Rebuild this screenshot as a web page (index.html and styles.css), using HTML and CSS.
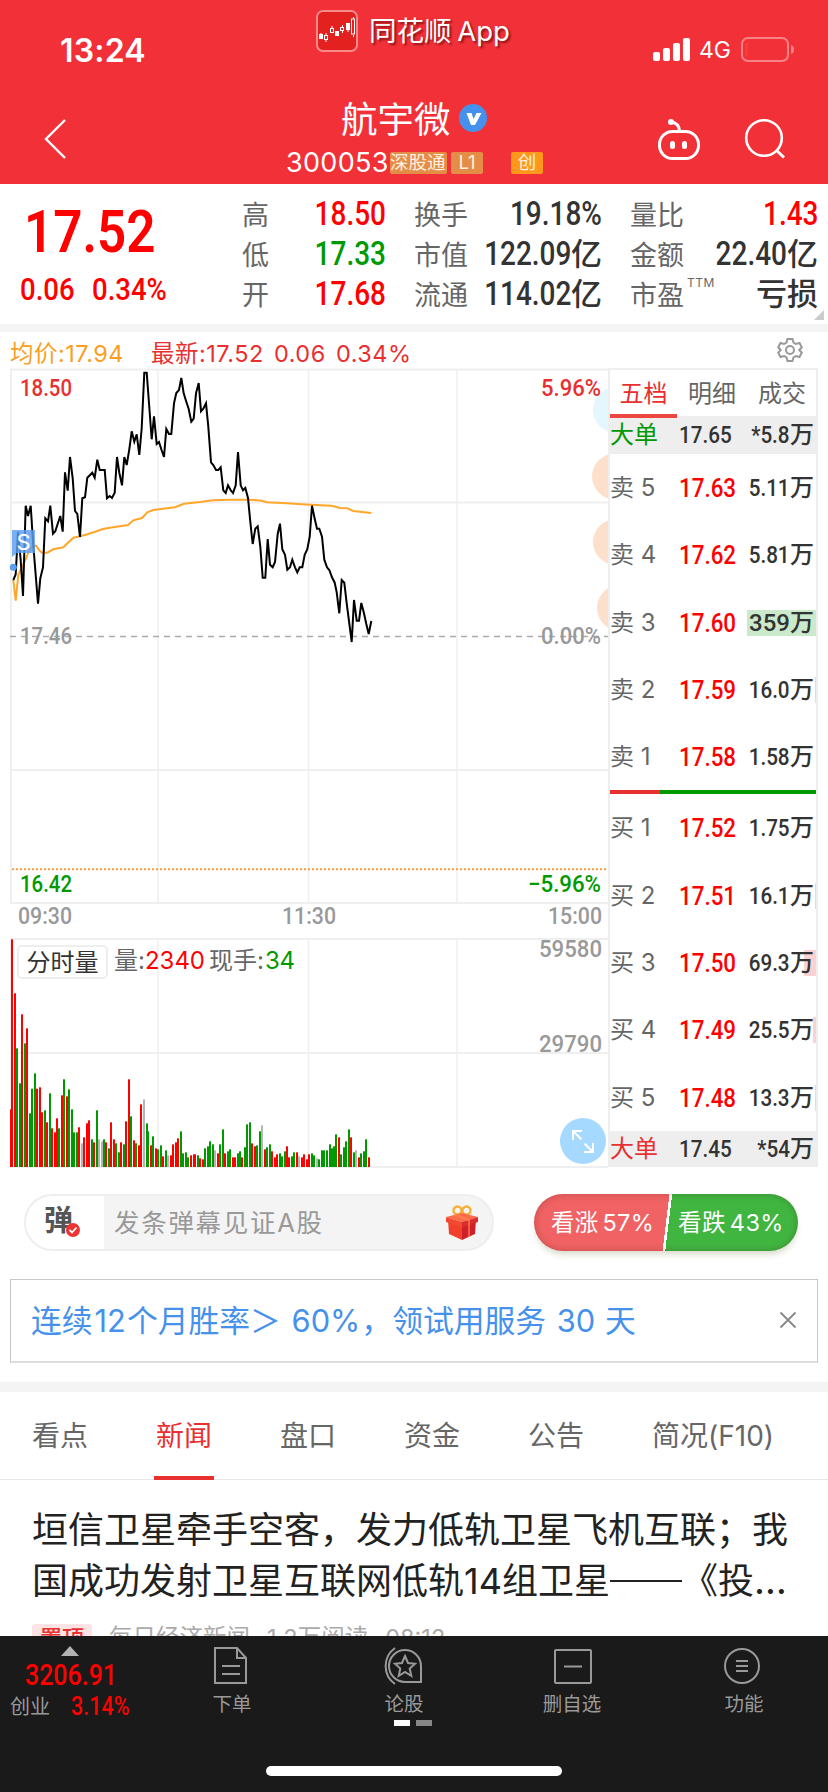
FILE: index.html
```html
<!DOCTYPE html>
<html lang="zh-CN">
<head>
    <meta charset="UTF-8">
    <meta name="viewport" content="width=device-width, initial-scale=1.0">
    <title>航宇微 300053</title>
    <link rel="stylesheet" href="styles.css">
</head>
<body>
    <header class="header">
        <div class="status">
            <div class="time">13:24</div>
            <div class="brand">
                <svg class="brand-logo" width="42" height="42" viewBox="0 0 42 42">
                    <rect x="1" y="1" width="40" height="40" rx="6" fill="#e3211f" stroke="#f98a8c" stroke-width="2"/>
                    <g fill="#fff" stroke="#fff">
                        <rect x="3.500" y="24.500" width="3" height="4"/>
                        <rect x="8.500" y="25.500" width="3" height="4" fill="none"/>
                        <path d="M5 23v2M10 23v2M10 30v2M16 16v2M26.500 15v2M26.500 20v3M32 20v2M37.500 7v2M37.500 25v2"/>
                        <rect x="14.500" y="18.500" width="3" height="4" fill="none"/>
                        <rect x="19.500" y="21.500" width="3" height="4"/>
                        <rect x="24.500" y="17.500" width="3" height="3" fill="none"/>
                        <rect x="30.500" y="13.500" width="3" height="6"/>
                        <rect x="35.500" y="9" width="3" height="15" fill="none"/>
                    </g>
                </svg>
                <span>同花顺 App</span>
            </div>
            <div class="signal">
                <svg width="38" height="24" viewBox="0 0 38 24" fill="#fff">
                    <rect x="0" y="14" width="7" height="9" rx="2"/>
                    <rect x="10" y="10" width="7" height="13" rx="2"/>
                    <rect x="20" y="5" width="7" height="18" rx="2"/>
                    <rect x="30" y="0" width="7" height="23" rx="2"/>
                </svg>
                <span>4G</span>
                <svg width="54" height="26" viewBox="0 0 54 26">
                    <rect x="1" y="1" width="46" height="23" rx="6" fill="none" stroke="#f88386" stroke-width="2"/>
                    <rect x="4" y="5" width="3" height="15" rx="1.500" fill="#ff3b30"/>
                    <path d="M50 8q3 1 3 4.500t-3 4.500z" fill="#f88386"/>
                </svg>
            </div>
        </div>
        <div class="nav">
            <svg class="back" width="24" height="42" viewBox="0 0 24 42" fill="none" stroke="#fff" stroke-width="2.400">
                <path d="M22 2L3 21l19 19"/>
            </svg>
            <div class="title">
                <div class="name">航宇微
                    <svg width="28" height="28" viewBox="0 0 28 28">
                        <circle cx="14" cy="14" r="14" fill="#4691eb"/>
                        <path d="M7.500 9h5l2 6 3-6h5l-6.500 12h-4z" fill="#fff"/>
                    </svg>
                </div>
                <div class="code">300053<i class="tag first">深股通</i><i class="tag">L1</i><i class="tag cyb">创</i></div>
            </div>
            <div class="nav-icons">
                <svg width="44" height="44" viewBox="0 0 44 44" fill="none" stroke="#fff" stroke-width="3">
                    <rect x="2.500" y="13.500" width="39" height="27" rx="13"/>
                    <path d="M14 4q8 1 8.500 9"/>
                    <circle cx="14" cy="4" r="3" fill="#fff" stroke="none"/>
                    <rect x="13" y="23" width="5" height="8" rx="2.500" fill="#fff" stroke="none"/>
                    <rect x="25" y="23" width="5" height="8" rx="2.500" fill="#fff" stroke="none"/>
                </svg>
                <svg width="42" height="42" viewBox="0 0 42 42" fill="none" stroke="#fff" stroke-width="2.600">
                    <circle cx="20" cy="20" r="17.800"/>
                    <path d="M32 32l8 7.500" stroke-width="3"/>
                </svg>
            </div>
        </div>
    </header>

    <section class="quote">
        <div class="price">
            <div class="last"><b class="num">17.52</b></div>
            <div class="change"><b class="num">0.06</b><b class="num">0.34%</b></div>
        </div>
        <dl class="stats s1">
            <dt>高</dt><dd class="up"><b class="num">18.50</b></dd>
            <dt>低</dt><dd class="down"><b class="num">17.33</b></dd>
            <dt>开</dt><dd class="up"><b class="num">17.68</b></dd>
        </dl>
        <dl class="stats s2">
            <dt>换手</dt><dd><b class="num">19.18%</b></dd>
            <dt>市值</dt><dd><b class="num">122.09</b>亿</dd>
            <dt>流通</dt><dd><b class="num">114.02</b>亿</dd>
        </dl>
        <dl class="stats s3">
            <dt>量比</dt><dd class="up"><b class="num">1.43</b></dd>
            <dt>金额</dt><dd><b class="num">22.40</b>亿</dd>
            <dt>市盈<sup>TTM</sup></dt><dd>亏损</dd>
        </dl>
        <i class="corner"></i>
    </section>

    <div class="legend">
        <span class="avg">均价:17.94</span>
        <span class="now">最新:17.52&nbsp; 0.06&nbsp; 0.34%</span>
        <svg width="26" height="26" viewBox="0 0 26 26" fill="none" stroke="#999" stroke-width="2">
            <path d="M10.500 2h5l1 3.500 2.500 1.500 3.500-1 2.300 4.300-2.500 2.700 2.500 2.700-2.300 4.300-3.500-1-2.500 1.500-1 3.500h-5l-1-3.500L7 19l-3.500 1-2.300-4.300L3.700 13l-2.500-2.700L3.500 6 7 7l2.500-1.500z"/>
            <circle cx="13" cy="13" r="4"/>
        </svg>
    </div>

    <section class="market">
        <!-- one chart unit is one page pixel, counted from the top of the page -->
        <svg class="chart" width="608" height="802" viewBox="0 368 608 802">
            <g stroke="#efefef" stroke-width="2" fill="none">
                <path d="M11 369v534M11 939v229"/>
                <path d="M158 370v533M308.500 370v533M457 370v533M158 940v227M308.500 940v227M457 940v227" stroke-width="1.500"/>
                <path d="M10 369.500h598M12 502.500h596M12 770h596M10 903h598M10 939h598M12 1053h596M10 1167h598"/>
            </g>
            <path d="M10 636.500h598" stroke="#aaa" stroke-width="1.300" stroke-dasharray="6 5"/>
            <path d="M12 869.300h595" stroke="#ff9a3c" stroke-width="2" stroke-dasharray="2 2"/>
            <g fill="#fde0cc">
                <circle cx="616" cy="410" r="23" fill="#e3f7fd"/>
                <circle cx="615" cy="476.500" r="23"/>
                <circle cx="616" cy="542" r="23"/>
                <circle cx="620" cy="608" r="23"/>
            </g>
            <g class="axis">
                <text x="20" y="396" textLength="52" lengthAdjust="spacingAndGlyphs" class="red">18.50</text>
                <text x="541" y="396" textLength="60" lengthAdjust="spacingAndGlyphs" class="red">5.96%</text>
                <text x="20" y="643.500" textLength="52" lengthAdjust="spacingAndGlyphs">17.46</text>
                <text x="541" y="643.500" textLength="60" lengthAdjust="spacingAndGlyphs">0.00%</text>
                <text x="20" y="892" textLength="52" lengthAdjust="spacingAndGlyphs" class="green">16.42</text>
                <text x="528" y="892" textLength="73" lengthAdjust="spacingAndGlyphs" class="green">−5.96%</text>
                <text x="18" y="923.500" textLength="54" lengthAdjust="spacingAndGlyphs">09:30</text>
                <text x="282" y="923.500" textLength="54" lengthAdjust="spacingAndGlyphs">11:30</text>
                <text x="548" y="923.500" textLength="54" lengthAdjust="spacingAndGlyphs">15:00</text>
                <text x="539" y="957" textLength="63" lengthAdjust="spacingAndGlyphs">59580</text>
                <text x="539" y="1052" textLength="63" lengthAdjust="spacingAndGlyphs">29790</text>
            </g>
            <polyline id="avgLine" fill="none" stroke="#ffa62b" stroke-width="2"/>
            <polyline id="priceLine" fill="none" stroke="#000" stroke-width="2"/>
            <g>
                <path d="M12 530h23v23H17l-5 4z" fill="#5c9ff0" fill-opacity=".82"/>
                <circle cx="13.300" cy="567.300" r="3.500" fill="#5c9ff0"/>
                <text x="16.500" y="550" class="sell-mark">S</text>
            </g>
            <g id="volume"></g>
            <g class="vol-title">
                <rect x="18" y="946" width="89" height="32" rx="4" fill="#fff" stroke="#eee" stroke-width="2"/>
                <text x="26.500" y="971" fill="#333">分时量</text>
                <text x="114" y="969">量:</text>
                <text x="145" y="969" textLength="60" class="up">2340</text>
                <text x="209" y="969">现手:</text>
                <text x="265" y="969" textLength="30" class="down">34</text>
            </g>
            <g>
                <circle cx="583" cy="1141" r="23" fill="#a5d9ff"/>
                <path d="M573 1140v-9h9M573 1131l8.500 8.500M584 1152h9v-9M593 1152l-8.500-8.500" fill="none" stroke="#fff" stroke-width="2"/>
            </g>
        </svg>

        <div class="book">
            <div class="book-tabs"><span class="on">五档</span><span>明细</span><span>成交</span></div>
            <div class="row big"><span class="down">大单</span><b class="num">17.65</b><em><b class="num">*5.8</b>万</em></div>
            <div class="rows">
                <div class="row"><span>卖 5</span><b class="num">17.63</b><em><b class="num">5.11</b>万</em></div>
                <div class="row"><span>卖 4</span><b class="num">17.62</b><em><b class="num">5.81</b>万</em></div>
                <div class="row"><span>卖 3</span><b class="num">17.60</b><em><i class="depth" style="width:69px"></i><b class="num wide">359</b>万</em></div>
                <div class="row"><span>卖 2</span><b class="num">17.59</b><em><i class="depth" style="width:1px"></i><b class="num">16.0</b>万</em></div>
                <div class="row"><span>卖 1</span><b class="num">17.58</b><em><b class="num">1.58</b>万</em></div>
            </div>
            <div class="ratio"><i></i></div>
            <div class="rows buy">
                <div class="row"><span>买 1</span><b class="num">17.52</b><em><b class="num">1.75</b>万</em></div>
                <div class="row"><span>买 2</span><b class="num">17.51</b><em><i class="depth" style="width:1px"></i><b class="num">16.1</b>万</em></div>
                <div class="row"><span>买 3</span><b class="num">17.50</b><em><i class="depth" style="width:12px"></i><b class="num">69.3</b>万</em></div>
                <div class="row"><span>买 4</span><b class="num">17.49</b><em><i class="depth" style="width:3px"></i><b class="num">25.5</b>万</em></div>
                <div class="row"><span>买 5</span><b class="num">17.48</b><em><i class="depth" style="width:1px"></i><b class="num">13.3</b>万</em></div>
            </div>
            <div class="row big"><span class="red">大单</span><b class="num">17.45</b><em><b class="num">*54</b>万</em></div>
        </div>
    </section>

    <section class="barrage">
        <div class="input">
            <div class="dan">弹
                <svg class="check" width="14" height="14" viewBox="0 0 14 14">
                    <circle cx="7" cy="7" r="7" fill="#ee3432"/>
                    <path d="M3.500 7l2.500 2.500 4.500-5" fill="none" stroke="#fff" stroke-width="1.800"/>
                </svg>
            </div>
            <span>发条弹幕见证A股</span>
            <svg width="34" height="36" viewBox="0 0 34 36">
                <circle cx="12.500" cy="5.500" r="4" fill="none" stroke="#f5b13a" stroke-width="2.500"/>
                <circle cx="21.500" cy="5.500" r="4" fill="none" stroke="#f5b13a" stroke-width="2.500"/>
                <path d="M3 15l14 5v15L4 29z" fill="#f2402c"/>
                <path d="M31 15l-14 5v15l13-6z" fill="#cf1f2b"/>
                <path d="M1 12l16-4 16 4-16 5z" fill="#ff6a48"/>
                <path d="M1 12l16 5v6L1 17z" fill="#f04a30"/>
                <path d="M33 12l-16 5v6l16-6z" fill="#dc2b2c"/>
                <path d="M8 10.500l15 5v17l2-1V14.500L12 9.500zM22 9l-13 5" fill="#ff9050" fill-opacity=".6"/>
            </svg>
        </div>
        <div class="vote">
            <span class="bull">看涨 57%</span>
            <span class="bear">看跌 43%</span>
        </div>
    </section>

    <section class="ad">
        <span>连续<u>12</u>个月胜率<span class="cjk">＞</span> <u>60%</u><span class="cjk">，</span>领试用服务 <u>30</u> 天</span>
        <svg width="18" height="18" viewBox="0 0 18 18" stroke="#888" stroke-width="1.800"><path d="M1.500 1.500l15 15M16.500 1.500l-15 15"/></svg>
    </section>

    <nav class="tabs">
        <span>看点</span><span class="on">新闻</span><span>盘口</span><span>资金</span><span>公告</span><span>简况(F10)</span>
    </nav>

    <article class="news">
        <h2>垣信卫星牵手空客<span class="cjk">，</span>发力低轨卫星飞机互联<span class="cjk">；</span>我<br>国成功发射卫星互联网低轨14组卫星<s></s>《投<small>…</small></h2>
        <p><i>置顶</i><span>每日经济新闻</span><span>1.2万阅读</span><span>08:12</span></p>
    </article>

    <footer class="toolbar">
        <div class="items">
            <div class="index">
                <i class="tri"></i>
                <b class="num">3206.91</b>
                <div><span>创业</span><b class="num">3.14%</b></div>
            </div>
            <div class="item order">
                <svg width="38" height="40" viewBox="0 0 38 40"><path d="M2 2h22l9 10v25H2zM24 2v10h9M9 20h18M9 28h18"/></svg>
                <span>下单</span>
            </div>
            <div class="item talk">
                <svg width="42" height="40" viewBox="0 0 42 40"><path d="M12 2A22 22 0 0 0 12 38"/><path d="M38 36V20A16 16 0 1 0 22 36z"/><path d="M22 10l3 7 7 .7-5.300 4.800 1.600 7.500-6.300-4-6.300 4 1.600-7.500L12 17.700l7-.7z"/></svg>
                <span>论股</span>
            </div>
            <div class="item remove">
                <svg width="40" height="40" viewBox="0 0 40 40"><rect x="3" y="4" width="36" height="33" rx="1"/><path d="M12 20.500h18"/></svg>
                <span>删自选</span>
            </div>
            <div class="item more">
                <svg width="40" height="40" viewBox="0 0 40 40"><circle cx="18" cy="20" r="17"/><path d="M12 15h12M12 20h12M12 25h12"/></svg>
                <span>功能</span>
            </div>
        </div>
        <div class="dots"><i></i><i></i></div>
        <div class="home"></div>
    </footer>

    <script src="script.js"></script>
</body>
</html>
```
FILE: styles.css
```css
* {
    box-sizing: border-box;
}

body {
    margin: 0;
    width: 828px;
    height: 1792px;
    overflow: hidden;
    background-color: #ffffff;
    color: #333333;
    font-family: Inter, "Noto Sans CJK SC", sans-serif;
    display: flex;
    flex-direction: column;
}

svg {
    display: block;
    flex: none;
}

i, em {
    font-style: normal;
}

/* narrow digits */
.num {
    display: inline-block;
    font-family: Roboto, sans-serif;
    font-weight: 500;
    transform: scaleX(0.86);
    transform-origin: right center;
}

/* full width punctuation */
.cjk {
    font-family: "Noto Sans CJK SC", sans-serif;
}

.up { color: #ff0000; fill: #ff0000; }
.down { color: #009900; fill: #009900; }
.red { color: #e93030; fill: #e93030; }
.green { color: #009900; fill: #009900; }

/* header */
.header {
    height: 184px;
    flex: none;
    background-color: #f23038;
    color: #ffffff;
}

.status {
    display: grid;
    grid-template-columns: 316px 337px 175px;
    height: 92px;
}

.time {
    padding: 32px 0 0 60px;
    font-size: 32px;
    line-height: 38px;
    font-weight: 600;
    letter-spacing: 0.2px;
}

.brand {
    display: flex;
    padding-top: 10px;
    gap: 11px;
    font-size: 27.500px;
    line-height: 43px;
    white-space: nowrap;
    word-spacing: -2px;
    text-shadow: 2px 2px 2px rgba(80, 0, 0, 0.6);
}

.signal {
    display: flex;
    align-items: center;
    height: 30px;
    margin-top: 35px;
    font-size: 23px;
}

.signal span {
    width: 34px;
    margin: 0 8px 0 8px;
}

.nav {
    display: grid;
    grid-template-columns: 286px 371px 171px;
    height: 92px;
}

.back {
    margin: 26px 0 0 43px;
}

.name {
    display: flex;
    align-items: center;
    padding-left: 55px;
    gap: 8px;
    height: 51px;
    font-size: 36.500px;
}

.code {
    display: flex;
    align-items: center;
    width: 257px;
    height: 40px;
    font-size: 27px;
    line-height: 36px;
    letter-spacing: 0.3px;
}

.tag {
    height: 22px;
    margin-right: 4px;
    padding: 0 5px;
    border-radius: 2px;
    background-color: #e38d46;
    color: #fdf0e0;
    font-size: 18.500px;
    line-height: 21px;
    letter-spacing: 0;
}

.tag.first {
    width: 57px;
    padding: 0;
    margin-left: auto;
    white-space: nowrap;
}

.tag + .tag {
    width: 32px;
    flex: none;
    text-align: center;
}

.tag.cyb {
    margin: 0 0 0 24px;
    background-color: #ff981b;
}

.nav-icons {
    display: flex;
    gap: 43px;
    padding-top: 26px;
}

/* quote */
.quote {
    position: relative;
    display: flex;
    height: 148px;
    flex: none;
    border-bottom: 8px solid #f4f4f4;
}

.price {
    width: 242px;
    padding-top: 9px;
    color: #ff0000;
}

.price .num {
    transform-origin: left center;
}

.last {
    padding-left: 24px;
    font-size: 59.500px;
    line-height: 74px;
    height: 75px;
}

.last .num {
    font-weight: 600;
}

.change {
    display: flex;
    gap: 9px;
    padding-left: 20px;
    font-size: 32px;
    line-height: 42px;
}

.stats {
    display: grid;
    grid-template-rows: repeat(3, 40px);
    grid-template-columns: auto 1fr;
    margin: 10px 28px 0 0;
    line-height: 40px;
}

.s1 { width: 144px; }
.s2 { width: 188px; }
.s3 { width: 188px; margin-right: 0; }

.stats dt {
    color: #666666;
    font-size: 27px;
    white-space: nowrap;
    padding-top: 2px;
}

.stats dd {
    display: flex;
    justify-content: flex-end;
    width: 0;
    min-width: 100%;
    margin: 0;
    font-size: 31px;
    font-weight: 500;
    white-space: nowrap;
}

.stats dd .num {
    font-size: 32.500px;
}

.stats sup {
    display: inline-block;
    margin-left: 3px;
    font-size: 12px;
    line-height: 12px;
    vertical-align: 18px;
    letter-spacing: 0.5px;
}

.corner {
    position: absolute;
    right: 4px;
    bottom: 4px;
    border-left: 10px solid transparent;
    border-bottom: 10px solid #cccccc;
}

.legend {
    display: flex;
    height: 36px;
    flex: none;
    padding-left: 10px;
    font-size: 23.500px;
    line-height: 44px;
    letter-spacing: 0.5px;
    word-spacing: -2px;
}

.avg {
    width: 141px;
    color: #fa9f22;
}

.now {
    width: 626px;
    color: #e93030;
}

.legend svg {
    margin-top: 5px;
}

/* chart and order book */
.market {
    display: flex;
    height: 802px;
    flex: none;
}

.axis text {
    font: 500 24px Roboto, sans-serif;
}

.axis text:not([class]) {
    fill: #999999;
}

.sell-mark {
    font-size: 22px;
    fill: #ffffff;
}

.vol-title text {
    font-size: 24px;
}

.vol-title text:not([fill]):not([class]) {
    fill: #666666;
}

.book {
    width: 210px;
    height: 799px;
    border: 2px solid #eeeeee;
}

.book-tabs {
    display: grid;
    grid-template-columns: 67px 70px 70px;
    height: 46px;
    color: #666666;
    font-size: 24px;
    line-height: 48px;
    text-align: center;
}

.book-tabs .on {
    height: 48px;
    border-bottom: 4px solid #ee4540;
    color: #e93030;
    z-index: 1;
}

.row {
    display: grid;
    grid-template-columns: 69px 60px 75px;
    align-items: center;
    flex: 1;
    padding-top: 1px;
    white-space: nowrap;
    font-size: 24px;
    line-height: 26px;
}

.row > span {
    color: #666666;
}

.row > span.down { color: #009900; }
.row > span.red { color: #e93030; }

.row > .num {
    color: #ff0000;
    font-size: 26px;
    transform-origin: left center;
}

.row em {
    position: relative;
    z-index: 0;
    display: flex;
    justify-content: flex-end;
    font-weight: 500;
}

.row em .wide {
    transform: none;
}

.depth {
    position: absolute;
    z-index: -1;
    right: -2px;
    top: 0;
    height: 26px;
    background-color: #cbeacb;
}

.buy .depth {
    background-color: #fad2d3;
}

.row.big {
    height: 38px;
    padding-top: 0;
    background-color: #eeeeee;
}

.row.big > .num {
    color: #333333;
    font-size: 24px;
}

.row.big:last-child {
    height: 35px;
}

.rows {
    display: flex;
    flex-direction: column;
    height: 336px;
}

.rows.buy {
    height: 337px;
}

.ratio {
    height: 4px;
    background-color: #009900;
}

.ratio i {
    display: block;
    width: 50px;
    height: 4px;
    background-color: #e93030;
}

/* barrage */
.barrage {
    display: flex;
    height: 109px;
    flex: none;
    padding: 24px 30px 0 24px;
    justify-content: space-between;
}

.input {
    display: flex;
    align-items: center;
    width: 470px;
    height: 57px;
    border: 2px solid #eeeeee;
    border-radius: 29px;
    background-color: #f4f4f4;
    overflow: hidden;
}

.input > span {
    flex: 1;
    padding-left: 10px;
    color: #999999;
    font-size: 25.500px;
    line-height: 53px;
    height: 53px;
    letter-spacing: 1.7px;
}

.input > svg {
    margin-right: 13px;
}

.dan {
    position: relative;
    width: 78px;
    height: 53px;
    padding-left: 18px;
    background-color: #ffffff;
    color: #555555;
    font-size: 29px;
    font-weight: 700;
    line-height: 50px;
}

.check {
    position: absolute;
    left: 40px;
    top: 27px;
}

.vote {
    display: flex;
    width: 264px;
    height: 57px;
    color: #ffffff;
    font-size: 23.500px;
    line-height: 58px;
    word-spacing: -3px;
    white-space: nowrap;
    border-radius: 29px;
    background: linear-gradient(97deg, #f06264 50%, #ffffff 50%, #ffffff 51%, #40b540 51%);
    box-shadow: inset 0 0 7px rgba(60, 0, 0, 0.25), 0 5px 7px -2px #d5d8c8;
}

.bull {
    width: 144px;
    padding-left: 17px;
    letter-spacing: 0.3px;
}

.bear {
    letter-spacing: 0.4px;
}

/* ad */
.ad {
    display: flex;
    align-items: center;
    justify-content: space-between;
    height: 84px;
    flex: none;
    margin: 0 10px;
    padding: 0 20px 2px;
    border: 1px solid #c8c8c8;
    border-bottom: 2px solid #dddddd;
    color: #4691eb;
    font-size: 30.800px;
    line-height: 40px;
}

.ad u {
    text-decoration: none;
    margin: 0 1px 0 2px;
}

/* tabs */
.tabs {
    display: grid;
    grid-template-columns: repeat(5, 124px) 1fr;
    height: 98px;
    flex: none;
    margin-top: 19px;
    padding-left: 32px;
    border-top: 10px solid #f4f4f4;
    border-bottom: 1px solid #e8e8e8;
    color: #666666;
    font-size: 28px;
    line-height: 89px;
}

.tabs .on {
    width: 60px;
    height: 88px;
    margin-left: -2px;
    padding-left: 2px;
    border-bottom: 4px solid #e93030;
    color: #e93030;
}

/* news */
.news {
    height: 156px;
    flex: none;
    padding: 22px 32px 0;
    overflow: hidden;
}

.news h2 {
    margin: 0;
    color: #222222;
    font-size: 36px;
    font-weight: 400;
    line-height: 50px;
    white-space: nowrap;
}

.news s {
    display: inline-block;
    width: 72px;
    height: 2px;
    background-color: #222222;
    vertical-align: 12px;
}

.news small {
    font-size: 38px;
}

.news p {
    display: flex;
    gap: 17px;
    margin: 18px 0 0;
    color: #aaaaaa;
    font-size: 23.500px;
    line-height: 28px;
    white-space: nowrap;
}

.news p i {
    height: 32px;
    padding: 0 8px;
    border-radius: 3px;
    background-color: #fde3e3;
    color: #e93030;
    font-size: 22px;
    font-weight: 500;
}

/* bottom bar */
.toolbar {
    height: 156px;
    flex: none;
    background-color: #1a1a1a;
    color: #999999;
    font-size: 19.500px;
}

.items {
    display: grid;
    grid-template-columns: 142px 180px 164px 172px 172px;
    height: 84px;
}

.index {
    padding: 10px 0 0 10px;
}

.index .num {
    color: #ff0000;
    transform-origin: left center;
}

.index > .num {
    display: block;
    margin-left: 15px;
    font-size: 29px;
    line-height: 39px;
}

.index div {
    display: flex;
    gap: 21px;
    font-size: 20px;
    line-height: 24px;
}

.index div .num {
    font-size: 25px;
}

.tri {
    display: block;
    width: 18px;
    margin-left: 51px;
    border: 9px solid transparent;
    border-top: none;
    border-bottom: 10px solid #b2b2b2;
}

.item {
    display: flex;
    flex-direction: column;
    align-items: center;
    padding-top: 10px;
    line-height: 37px;
}

.item svg {
    fill: none;
    stroke: #999999;
    stroke-width: 2;
}

.dots {
    display: flex;
    gap: 6px;
    padding-left: 394px;
}

.dots i {
    width: 16px;
    height: 6px;
    background-color: #ffffff;
}

.dots i + i {
    background-color: #888888;
}

.home {
    width: 296px;
    height: 10px;
    margin: 40px auto 0;
    border-radius: 5px;
    background-color: #ffffff;
}
```
FILE: script.js
```js
// coordinates are in thirds of a pixel, y starts at the top of each pane
var SCALE = 3;
var PRICE_TOP = 360;
var VOL_TOP = 860;
var VOL_BASE = 921;

var price = "40,660 47,643 54,515 62,600 69,708 77,437 84,468 92,437 99,545 106,630 114,731 121,655 129,622 136,475 144,484 151,437 159,521 166,514 173,491 181,468 188,515 195,337 203,392 210,291 218,355 225,453 232,462 240,531 247,415 255,412 262,353 277,338 284,353 292,299 299,330 314,330 321,415 329,408 336,414 344,398 351,291 358,338 366,376 373,291 380,315 388,268 395,214 403,245 410,223 418,285 425,205 433,38 440,38 447,130 455,238 462,169 470,252 477,246 484,268 492,291 499,207 507,222 514,222 522,130 529,99 537,90 544,54 551,100 559,125 566,147 574,185 581,176 588,100 596,69 603,154 610,146 618,130 625,200 633,307 640,315 648,330 655,330 662,322 670,391 677,399 684,376 692,391 699,399 707,376 714,276 722,376 729,391 736,384 744,414 751,485 758,552 766,506 773,499 781,560 788,653 796,653 803,537 810,614 818,622 825,606 833,522 840,491 847,568 855,584 862,629 870,622 877,599 885,622 892,637 899,622 907,622 914,584 922,568 929,530 936,437 944,476 951,506 958,506 966,530 973,599 981,622 988,630 996,652 1004,668 1010,697 1018,760 1025,660 1033,668 1040,730 1048,790 1055,846 1062,720 1070,782 1077,782 1084,729 1092,760 1099,792 1106,822 1114,783";

var average = "40,660 47,722 55,645 70,612 77,597 85,578 95,560 108,557 118,571 126,578 142,578 160,568 190,562 220,533 244,528 262,523 276,518 290,514 308,507 330,503 384,495 400,481 426,474 442,457 460,450 525,442 552,431 600,426 640,421 690,419 750,419 785,422 800,427 860,430 930,434 995,437 1020,444 1042,445 1060,453 1114,459";

// x, top, colour (r = up, g = down, x = flat)
var volume = "33 748 r,36 238 r,45 400 r,51 565 g,60 670 g,66 463 r,75 550 g,81 505 r,90 760 g,96 686 g,105 640 g,111 686 r,120 682 r,126 757 r,135 751 g,141 787 r,150 700 g,156 805 r,165 817 r,171 775 r,177 805 g,186 706 r,192 658 g,201 709 r,207 688 g,216 748 g,222 817 g,231 817 g,237 802 r,246 850 x,252 832 r,261 790 r,267 781 r,276 838 g,282 847 r,291 751 g,297 838 x,306 844 x,312 838 g,318 847 r,327 865 g,333 787 r,342 838 r,348 850 g,357 877 g,363 847 r,372 853 g,378 784 r,387 658 r,393 769 g,402 841 r,408 850 g,417 856 r,423 733 r,432 718 x,441 790 g,444 814 g,453 856 r,459 829 g,468 865 r,474 868 g,483 856 g,489 889 r,498 871 g,504 886 x,513 886 r,519 853 r,528 847 r,534 835 r,543 814 g,549 880 g,558 877 g,564 892 g,573 886 r,582 883 r,585 883 r,594 886 g,600 895 r,609 898 r,615 865 g,624 859 g,630 844 g,639 853 g,645 871 x,654 880 r,660 853 g,669 808 g,675 880 r,684 874 g,690 868 g,699 892 r,705 892 r,714 880 g,720 874 g,726 892 r,735 862 g,741 793 g,750 787 g,756 850 r,765 859 r,771 856 g,780 814 g,786 796 x,795 868 r,801 862 g,810 853 g,816 874 r,825 892 r,831 883 r,840 880 g,846 889 g,855 874 g,861 859 r,867 892 r,876 889 g,882 877 g,891 877 r,897 889 x,906 892 r,912 883 r,921 898 r,927 883 r,936 880 g,942 886 g,951 895 x,957 898 g,966 871 g,972 871 g,981 871 g,990 853 g,996 865 g,1002 859 g,1008 823 g,1017 832 r,1023 883 g,1032 862 g,1038 844 g,1047 808 g,1053 832 r,1062 877 g,1068 871 x,1077 892 r,1083 880 g,1092 874 g,1098 838 g,1107 892 r";

var colors = { r: "#ff0000", g: "#009900", x: "#b5b5b5" };

function toPoints(str) {
    return str.split(" ").map(function(p) {
        var xy = p.split(",");
        return (xy[0] / SCALE).toFixed(1) + "," + (PRICE_TOP + xy[1] / SCALE).toFixed(1);
    }).join(" ");
}

document.getElementById("priceLine").setAttribute("points", toPoints(price));
document.getElementById("avgLine").setAttribute("points", toPoints(average));

var group = document.getElementById("volume");
volume.split(",").forEach(function(item) {
    var v = item.split(" ");
    var rect = document.createElementNS("http://www.w3.org/2000/svg", "rect");
    rect.setAttribute("x", v[0] / SCALE - 1);
    rect.setAttribute("y", VOL_TOP + v[1] / SCALE);
    rect.setAttribute("width", 2);
    rect.setAttribute("height", (VOL_BASE - v[1]) / SCALE);
    rect.setAttribute("fill", colors[v[2]]);
    group.appendChild(rect);
});
```
